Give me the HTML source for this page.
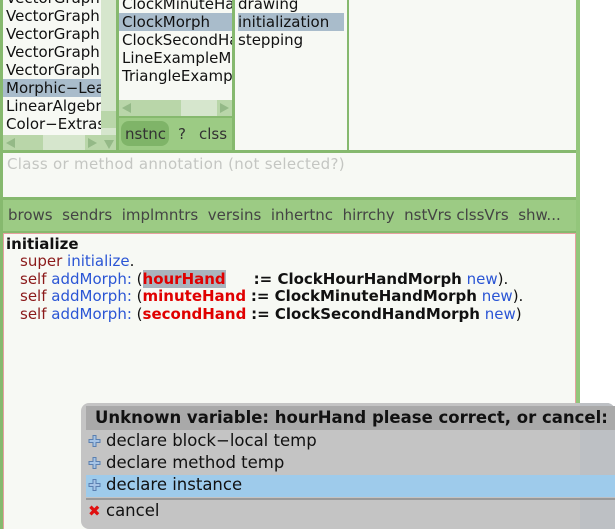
<!DOCTYPE html>
<html><head><meta charset="utf-8"><style>
*{margin:0;padding:0;box-sizing:border-box}
body{width:616px;height:529px;overflow:hidden;background:#fff;font-family:"DejaVu Sans","Liberation Sans",sans-serif;font-size:15px;color:#111;position:relative}
.a{position:absolute}
.row{position:absolute;left:0;height:18px;line-height:18px;white-space:nowrap;padding-left:3px;overflow:hidden}
.sel{background:#a9bccb}
.tri{position:absolute;width:0;height:0}
.pp{font-size:16.5px}
</style></head><body>
<div class="a" style="left:0;top:0;width:580px;height:529px;background:#86b96e"></div>
<div class="a" style="left:576px;top:0;width:4px;height:529px;background:#93c67b"></div>

<div class="a" style="left:3px;top:0;width:98px;height:135px;background:#f7f9f4;overflow:hidden">
 <div class="row" style="top:-11px">VectorGraph</div>
 <div class="row" style="top:7px">VectorGraph</div>
 <div class="row" style="top:25px">VectorGraph</div>
 <div class="row" style="top:43px">VectorGraph</div>
 <div class="row" style="top:61px">VectorGraph</div>
 <div class="row sel" style="top:79px;width:98px">Morphic−Lea</div>
 <div class="row" style="top:97px">LinearAlgebr</div>
 <div class="row" style="top:115px">Color−Extras</div>
 <div class="row" style="top:133px">XAXO</div>
</div>
<div class="a" style="left:101px;top:0;width:15px;height:135px;background:#d6e6cd"></div>
<div class="a" style="left:101px;top:111px;width:15px;height:17px;background:#b9d6a9"></div>
<div class="a" style="left:3px;top:135px;width:113px;height:15px;background:#d6e6cd"></div>
<div class="a" style="left:3px;top:135px;width:40px;height:15px;background:#b9d6a9"></div>
<div class="a" style="left:85px;top:135px;width:31px;height:15px;background:#b9d6a9"></div>
<div class="tri" style="left:6px;top:138px;border-right:9px solid #94b987;border-top:5px solid transparent;border-bottom:5px solid transparent"></div>
<div class="tri" style="left:88px;top:138px;border-left:9px solid #94b987;border-top:5px solid transparent;border-bottom:5px solid transparent"></div>
<div class="tri" style="left:104px;top:140px;border-top:9px solid #94b987;border-left:5px solid transparent;border-right:5px solid transparent"></div>

<div class="a" style="left:119px;top:0;width:113px;height:100px;background:#f7f9f4;overflow:hidden">
 <div class="row" style="top:-5px">ClockMinuteHand</div>
 <div class="row sel" style="top:13px;width:113px">ClockMorph</div>
 <div class="row" style="top:31px">ClockSecondHand</div>
 <div class="row" style="top:49px">LineExampleMorph</div>
 <div class="row" style="top:67px">TriangleExample</div>
</div>
<div class="a" style="left:119px;top:100px;width:113px;height:16px;background:#d6e6cd"></div>
<div class="a" style="left:119px;top:100px;width:62px;height:16px;background:#b9d6a9"></div>
<div class="a" style="left:217px;top:100px;width:15px;height:16px;background:#b9d6a9"></div>
<div class="tri" style="left:122px;top:103px;border-right:9px solid #94b987;border-top:5px solid transparent;border-bottom:5px solid transparent"></div>
<div class="tri" style="left:220px;top:103px;border-left:9px solid #94b987;border-top:5px solid transparent;border-bottom:5px solid transparent"></div>
<div class="a" style="left:119px;top:118px;width:113px;height:32px;background:#9ccb84"></div>
<div class="a" style="left:121px;top:121px;width:48px;height:25px;background:#7fb468;border-radius:8px"></div>
<div class="a" style="left:125px;top:124px;line-height:20px;color:#333">nstnc</div>
<div class="a" style="left:178px;top:124px;line-height:20px;color:#333">?</div>
<div class="a" style="left:199px;top:124px;line-height:20px;color:#333">clss</div>

<div class="a" style="left:235px;top:0;width:112px;height:150px;background:#f7f9f4;overflow:hidden">
 <div class="row" style="top:-5px">drawing</div>
 <div class="row sel" style="top:13px;left:3px;width:106px;padding-left:0">initialization</div>
 <div class="row" style="top:31px">stepping</div>
</div>
<div class="a" style="left:349px;top:0;width:227px;height:150px;background:#f7f9f4"></div>

<div class="a" style="left:3px;top:153px;width:573px;height:44px;background:#f7f9f4"></div>
<div class="a" style="left:7px;top:154px;line-height:20px;color:#c4c6c2;letter-spacing:0.3px">Class or method annotation (not selected?)</div>

<div class="a" style="left:3px;top:200px;width:573px;height:31px;background:#9ccb84"></div>
<div class="a" style="left:8px;top:205px;line-height:20px;color:#444;white-space:nowrap">brows&nbsp; sendrs&nbsp; implmntrs&nbsp; versins&nbsp; inhertnc&nbsp; hirrchy&nbsp; nstVrs clssVrs&nbsp; shw...</div>

<div class="a" style="left:3px;top:233px;width:573px;height:296px;background:#f7f9f4;border-top:1px solid #e6a0a0;border-left:1px solid #e6a0a0;border-right:1px solid #e6a0a0"></div>
<div class="a" style="left:6px;top:235px;line-height:18px;white-space:nowrap">
 <div style="font-weight:bold">initialize</div>
 <div style="padding-left:14px;height:17.5px;line-height:17.5px"><span style="color:#8b1a1a">super</span> <span style="color:#2a55d5">initialize</span>.</div>
 <div style="padding-left:14px;height:17.5px;line-height:17.5px"><span style="color:#8b1a1a">self</span> <span style="color:#2a55d5">addMorph:</span> (<b style="color:#e00000;background:#a9b4bd">hourHand</b><span style="display:inline-block;width:28px"></span><b>:= ClockHourHandMorph</b> <span style="color:#2a55d5">new</span>).</div>
 <div style="padding-left:14px;height:17.5px;line-height:17.5px"><span style="color:#8b1a1a">self</span> <span style="color:#2a55d5">addMorph:</span> (<b style="color:#e00000">minuteHand</b> <b>:= ClockMinuteHandMorph</b> <span style="color:#2a55d5">new</span>).</div>
 <div style="padding-left:14px;height:17.5px;line-height:17.5px"><span style="color:#8b1a1a">self</span> <span style="color:#2a55d5">addMorph:</span> (<b style="color:#e00000">secondHand</b> <b>:= ClockSecondHandMorph</b> <span style="color:#2a55d5">new</span>)</div>
</div>

<div class="a" style="left:81px;top:403px;width:534px;height:126px;background:#c4c4c4;border-radius:8px 8px 0 8px"></div>
<div class="a" style="left:580px;top:403px;width:35px;height:126px;background:#bdc0c4;border-radius:0 8px 0 0"></div>
<div class="a" style="left:86px;top:406px;width:529px;height:24px;background:#a9a9a9"></div>
<div class="a pp" style="left:95px;top:406px;line-height:24px;font-weight:bold;color:#111;white-space:nowrap">Unknown variable: hourHand please correct, or cancel:</div>
<div class="a" style="left:86px;top:475px;width:529px;height:22px;background:#9ecbeb"></div>
<div class="a" style="left:86px;top:498px;width:529px;height:2px;background:#999"></div>
<svg class="a" style="left:88px;top:434px" width="14" height="70" viewBox="0 0 14 70">
 <g fill="#a6c4e6" stroke="#5a7fb0" stroke-width="1">
  <path d="M5 1.5h3v4h4v3h-4v4h-3v-4h-4v-3h4z"/>
  <path d="M5 23.5h3v4h4v3h-4v4h-3v-4h-4v-3h4z"/>
  <path d="M5 45.5h3v4h4v3h-4v4h-3v-4h-4v-3h4z"/>
 </g>
</svg>
<div class="a pp" style="left:106px;top:430px;line-height:22px;white-space:nowrap;color:#111">declare block−local temp</div>
<div class="a pp" style="left:106px;top:452px;line-height:22px;white-space:nowrap;color:#111">declare method temp</div>
<div class="a pp" style="left:106px;top:474px;line-height:22px;white-space:nowrap;color:#111">declare instance</div>
<div class="a" style="left:88px;top:500px;line-height:22px;color:#e01010;font-size:15px">✖</div>
<div class="a pp" style="left:106px;top:500px;line-height:22px;color:#111">cancel</div>
</body></html>
